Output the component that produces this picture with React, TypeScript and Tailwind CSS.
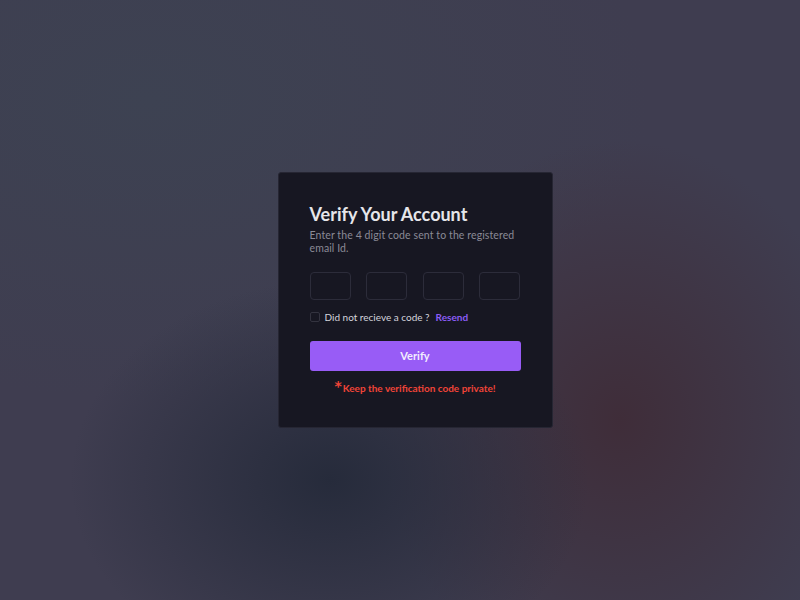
import React from 'react';

const font = { fontFamily: 'Lato, "Liberation Sans", sans-serif' };

export default function App() {
  return (
    <div
      className="w-[800px] h-[600px] flex items-center justify-center pl-[30px] bg-[#3f3d50] bg-[radial-gradient(ellipse_260px_200px_at_330px_480px,#262b3b,transparent),radial-gradient(ellipse_240px_280px_at_620px_420px,#3f2d39,transparent),radial-gradient(ellipse_500px_300px_at_150px_100px,#3d4252,transparent)]"
      style={font}
    >
      <div className="w-[275px] h-[256px] bg-[#171722] border border-[#262633] rounded-[3px] px-[31px] pt-[29px]">
        <h1 className="text-[18px] leading-[24px] font-bold text-[#e6e6ea]">Verify Your Account</h1>
        <p className="mt-[3px] text-[10.5px] leading-[13px] text-[#8a8a96] tracking-[0.1px]">
          Enter the 4 digit code sent to the registered email Id.
        </p>

        <div className="mt-[17px] flex justify-between">
          {[0, 1, 2, 3].map((i) => (
            <input
              key={i}
              className="w-[41px] h-[28px] bg-transparent border border-[#2c2c3a] rounded-[4px] text-center text-white outline-none"
            />
          ))}
        </div>

        <div className="mt-[10px] flex items-center gap-[4px] text-[10px] leading-[14px]">
          <span className="w-[10px] h-[10px] border border-[#33333f] rounded-[2px]" />
          <span className="text-[#d4d4dc] ml-[1px]">Did not recieve a code ?</span>
          <span className="text-[#8b5cf6] font-bold ml-[2px]">Resend</span>
        </div>

        <button className="mt-[17px] w-full h-[30px] bg-[#985cf6] rounded-[3px] text-[11px] text-[#f2eefe] font-bold">
          Verify
        </button>

        <p className="mt-[10px] text-center text-[10px] leading-[14px] font-bold text-[#f04438]">
          <span className="inline-block align-top text-[14px] leading-[10px] mr-[1px]" style={{ fontFamily: '"DejaVu Sans", sans-serif' }}>*</span>Keep the verification code private!
        </p>
      </div>
    </div>
  );
}
